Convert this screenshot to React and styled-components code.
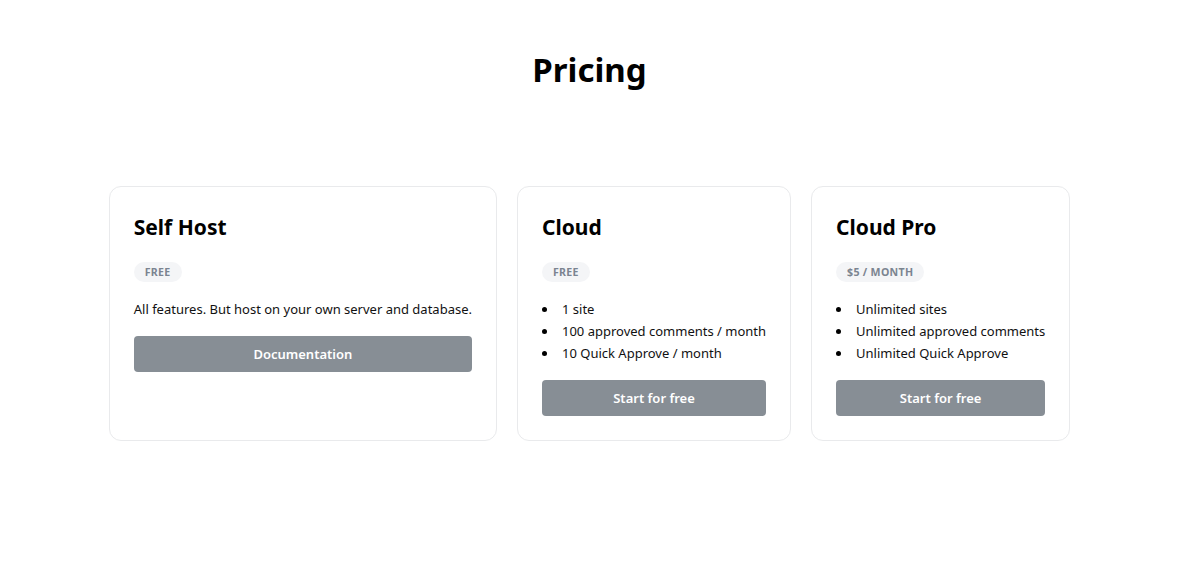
import React from 'react';
import styled, { createGlobalStyle } from 'styled-components';

const GlobalStyle = createGlobalStyle`
  body {
    margin: 0;
    background: #fff;
    font-family: 'Noto Sans', 'Open Sans', sans-serif;
    color: #111;
  }
`;

const plans = [
  {
    name: 'Self Host',
    price: 'Free',
    description: 'All features. But host on your own server and database.',
    action: 'Documentation',
  },
  {
    name: 'Cloud',
    price: 'Free',
    features: ['1 site', '100 approved comments / month', '10 Quick Approve / month'],
    action: 'Start for free',
  },
  {
    name: 'Cloud Pro',
    price: '$5 / month',
    features: ['Unlimited sites', 'Unlimited approved comments', 'Unlimited Quick Approve'],
    action: 'Start for free',
  },
];

//Component
const App = () => {
  return (
    <Page>
      <GlobalStyle />
      <Heading>Pricing</Heading>
      <Cards>
        {plans.map(plan => (
          <Card key={plan.name}>
            <Title>{plan.name}</Title>
            <Badge>{plan.price}</Badge>
            {plan.description && <Description>{plan.description}</Description>}
            {plan.features && (
              <Features>
                {plan.features.map(f => (
                  <Feature key={f}>{f}</Feature>
                ))}
              </Features>
            )}
            <Button>{plan.action}</Button>
          </Card>
        ))}
      </Cards>
    </Page>
  );
};

export default App;

const Page = styled.div`
  padding-top: 48px;
  display: flex;
  flex-direction: column;
  align-items: center;
`;

const Heading = styled.h1`
  margin: 0;
  font-size: 33px;
  line-height: 43px;
  font-weight: 700;
  color: #000;
`;

const Cards = styled.div`
  margin-top: 95px;
  display: flex;
  gap: 20px;
  align-items: stretch;
`;

const Card = styled.div`
  display: flex;
  flex-direction: column;
  align-items: stretch;
  padding: 24px;
  border: 1px solid #e9eaec;
  border-radius: 12px;
  background: #fff;
`;

const Title = styled.h2`
  margin: 0;
  font-size: 21px;
  line-height: 32px;
  font-weight: 700;
  color: #000;
`;

const Badge = styled.span`
  align-self: flex-start;
  margin-top: 19px;
  padding: 0 11px;
  height: 20px;
  line-height: 20px;
  border-radius: 10px;
  background: #f4f5f7;
  color: #7b8490;
  font-size: 10.6px;
  font-weight: 700;
  text-transform: uppercase;
  letter-spacing: 0.3px;
`;

const Description = styled.p`
  margin: 16px 0 0;
  font-size: 13px;
  line-height: 22px;
`;

const Features = styled.ul`
  margin: 16px 0 0;
  padding: 0;
  list-style: none;
  font-size: 13px;
  line-height: 22px;
`;

const Feature = styled.li`
  display: flex;
  align-items: center;

  &::before {
    content: '';
    flex-shrink: 0;
    width: 5px;
    height: 5px;
    margin-right: 15px;
    border-radius: 50%;
    background: #000;
  }
`;

const Button = styled.button`
  margin-top: 16px;
  height: 36px;
  border: none;
  border-radius: 4px;
  background: #878e95;
  color: #fff;
  font-family: inherit;
  font-size: 13px;
  font-weight: 600;
  cursor: pointer;
`;
